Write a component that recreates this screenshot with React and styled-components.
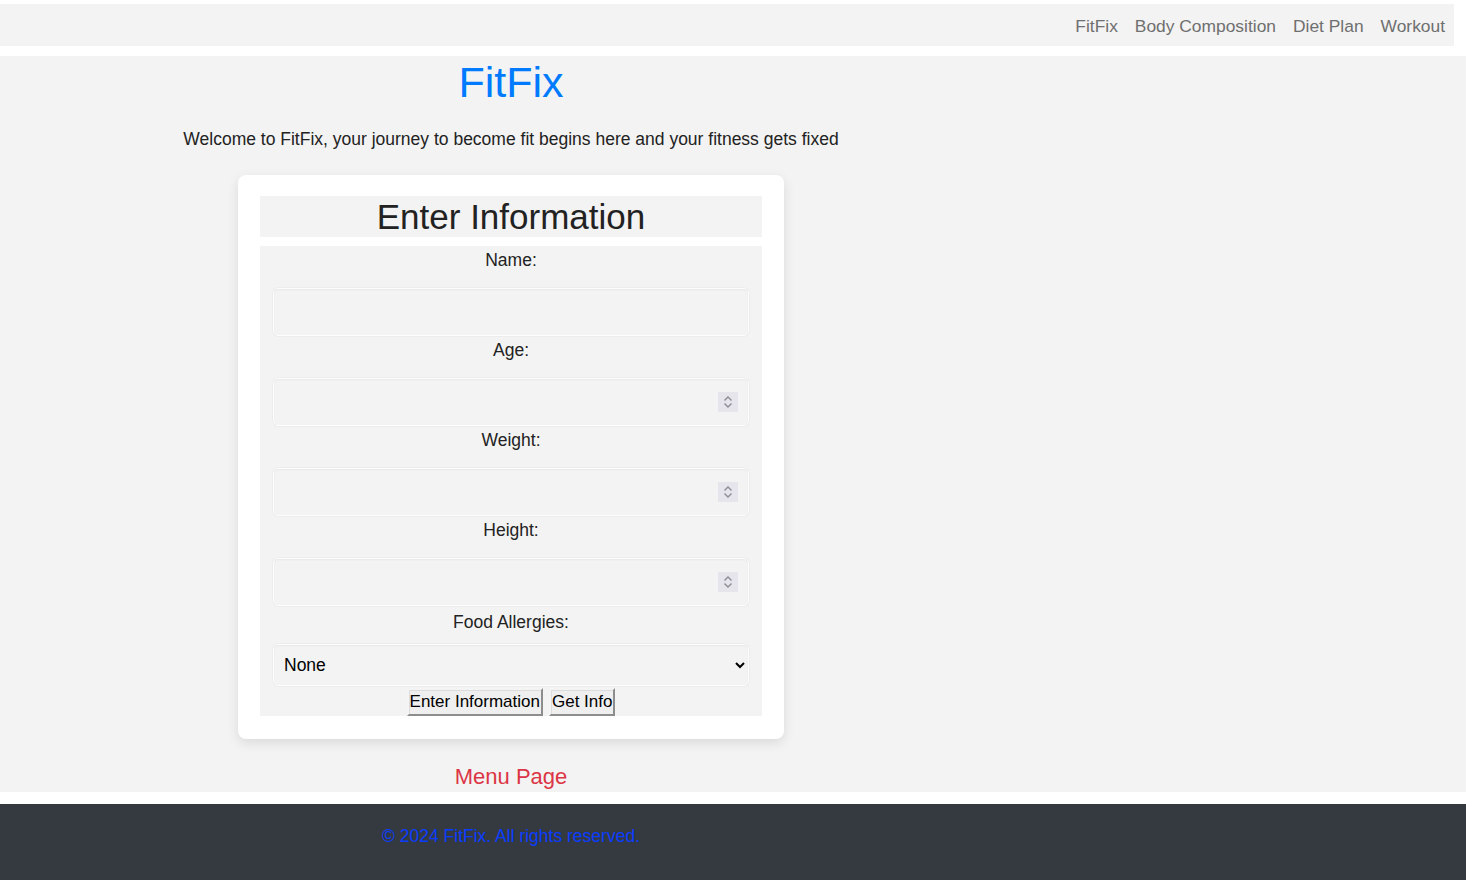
import React from "react";
import styled, { createGlobalStyle } from "styled-components";

const Global = createGlobalStyle`
  html, body { margin: 0; padding: 0; background: #ffffff; }
  body {
    font-family: "Liberation Sans", Arial, sans-serif;
    font-size: 17.5px;
    color: #222;
  }
  * { box-sizing: border-box; }
`;

const Nav = styled.nav`
  margin: 4px 12px 10px 0;
  height: 42px;
  background: #f3f3f3;
  display: flex;
  align-items: center;
  justify-content: flex-end;
  gap: 17px;
  padding: 3px 9px 0 0;
`;

const NavLink = styled.a`
  color: #6f6f6f;
  text-decoration: none;
  font-size: 17.4px;
`;

const Main = styled.main`
  background: #f3f3f3;
  display: flex;
`;

const Column = styled.div`
  width: 1022px;
  display: flex;
  flex-direction: column;
  align-items: center;
`;

const Title = styled.h1`
  margin: 2px 0 0;
  font-size: 43px;
  font-weight: 400;
  color: #007bff;
  line-height: normal;
`;

const Welcome = styled.p`
  margin: 22px 0 26px;
  font-size: 17.5px;
  line-height: 20px;
  color: #222;
`;

const Card = styled.section`
  width: 546px;
  background: #fff;
  border-radius: 8px;
  padding: 21px 22px 23px;
  box-shadow: 0 4px 12px rgba(0, 0, 0, 0.1);
`;

const CardHeader = styled.h2`
  margin: 0 0 9px;
  background: #f3f3f3;
  height: 41px;
  font-size: 35px;
  font-weight: 400;
  color: #222;
  text-align: center;
  line-height: 42px;
`;

const Form = styled.form`
  background: #f3f3f3;
  padding: 0 13px;
  display: flex;
  flex-direction: column;
  align-items: stretch;
`;

const Label = styled.label`
  display: block;
  text-align: center;
  line-height: 20px;
  font-size: 17.5px;
  color: #222;
  margin-top: ${(p) => (p.$tight ? "6px" : "4px")};
  margin-bottom: ${(p) => (p.$tight ? "12px" : "18px")};
`;

const fieldSkin = `
  width: 100%;
  margin: 0;
  font: inherit;
  background: #f3f3f3;
  border: 1.5px solid #fdfdfd;
  border-radius: 5px;
  box-shadow: 0 0 0 0.5px #e6e6e6, inset 0 1px 2px rgba(0, 0, 0, 0.05);
`;

const Input = styled.input`
  ${fieldSkin}
  display: block;
  height: 48px;
  padding: 0 36px 0 10px;
  -moz-appearance: textfield;
  &::-webkit-inner-spin-button,
  &::-webkit-outer-spin-button {
    -webkit-appearance: none;
    margin: 0;
  }
`;

const NumberWrap = styled.div`
  position: relative;
`;

const Spinner = styled.svg`
  position: absolute;
  right: 11px;
  top: 14px;
  width: 20px;
  height: 20px;
  pointer-events: none;
`;

const Select = styled.select`
  ${fieldSkin}
  height: 42px;
  padding: 0 6px;
  color: #000;
`;

const Buttons = styled.div`
  display: flex;
  justify-content: center;
  gap: 6px;
  margin-top: 2px;
`;

const Button = styled.button`
  font: inherit;
  font-size: 17px;
  color: #000;
  background: #efefef;
  border-width: 2px;
  border-style: solid;
  border-color: #f4f4f4 #8d8d8d #8d8d8d #f4f4f4;
  box-shadow: inset 1px 1px 0 #dcdcdc;
  padding: 2px 1px;
  line-height: 20px;
  height: 28px;
`;

const MenuLink = styled.a`
  margin: 25px 0 3px;
  font-size: 22px;
  color: #dc3545;
  text-decoration: none;
  line-height: 25px;
`;

const Footer = styled.footer`
  margin-top: 12px;
  height: 76px;
  background: #343a40;
  display: flex;
`;

const FooterText = styled.p`
  width: 1022px;
  margin: 0;
  padding-top: 22px;
  text-align: center;
  color: #0a3dff;
  font-size: 17.5px;
`;

function NumberField({ id }) {
  return (
    <NumberWrap>
      <Input id={id} type="number" />
      <Spinner viewBox="0 0 20 20" aria-hidden="true">
        <rect x="0" y="0" width="20" height="20" fill="#e6e5ec" />
        <path
          d="M6.5 8.5 L10 5 L13.5 8.5"
          fill="none"
          stroke="#8c8b96"
          strokeWidth="1.4"
        />
        <path
          d="M6.5 11.5 L10 15 L13.5 11.5"
          fill="none"
          stroke="#8c8b96"
          strokeWidth="1.4"
        />
      </Spinner>
    </NumberWrap>
  );
}

export default function App() {
  return (
    <>
      <Global />
      <Nav>
        <NavLink href="#">FitFix</NavLink>
        <NavLink href="#">Body Composition</NavLink>
        <NavLink href="#">Diet Plan</NavLink>
        <NavLink href="#">Workout</NavLink>
      </Nav>
      <Main>
        <Column>
          <Title>FitFix</Title>
          <Welcome>
            Welcome to FitFix, your journey to become fit begins here and your
            fitness gets fixed
          </Welcome>
          <Card>
            <CardHeader>Enter Information</CardHeader>
            <Form onSubmit={(e) => e.preventDefault()}>
              <Label htmlFor="name">Name:</Label>
              <Input id="name" type="text" />
              <Label htmlFor="age">Age:</Label>
              <NumberField id="age" />
              <Label htmlFor="weight">Weight:</Label>
              <NumberField id="weight" />
              <Label htmlFor="height">Height:</Label>
              <NumberField id="height" />
              <Label $tight htmlFor="allergies">Food Allergies:</Label>
              <Select id="allergies" defaultValue="none">
                <option value="none">None</option>
                <option value="nuts">Nuts</option>
                <option value="dairy">Dairy</option>
                <option value="gluten">Gluten</option>
              </Select>
              <Buttons>
                <Button type="submit">Enter Information</Button>
                <Button type="button">Get Info</Button>
              </Buttons>
            </Form>
          </Card>
          <MenuLink href="#">Menu Page</MenuLink>
        </Column>
      </Main>
      <Footer>
        <FooterText>© 2024 FitFix. All rights reserved.</FooterText>
      </Footer>
    </>
  );
}
